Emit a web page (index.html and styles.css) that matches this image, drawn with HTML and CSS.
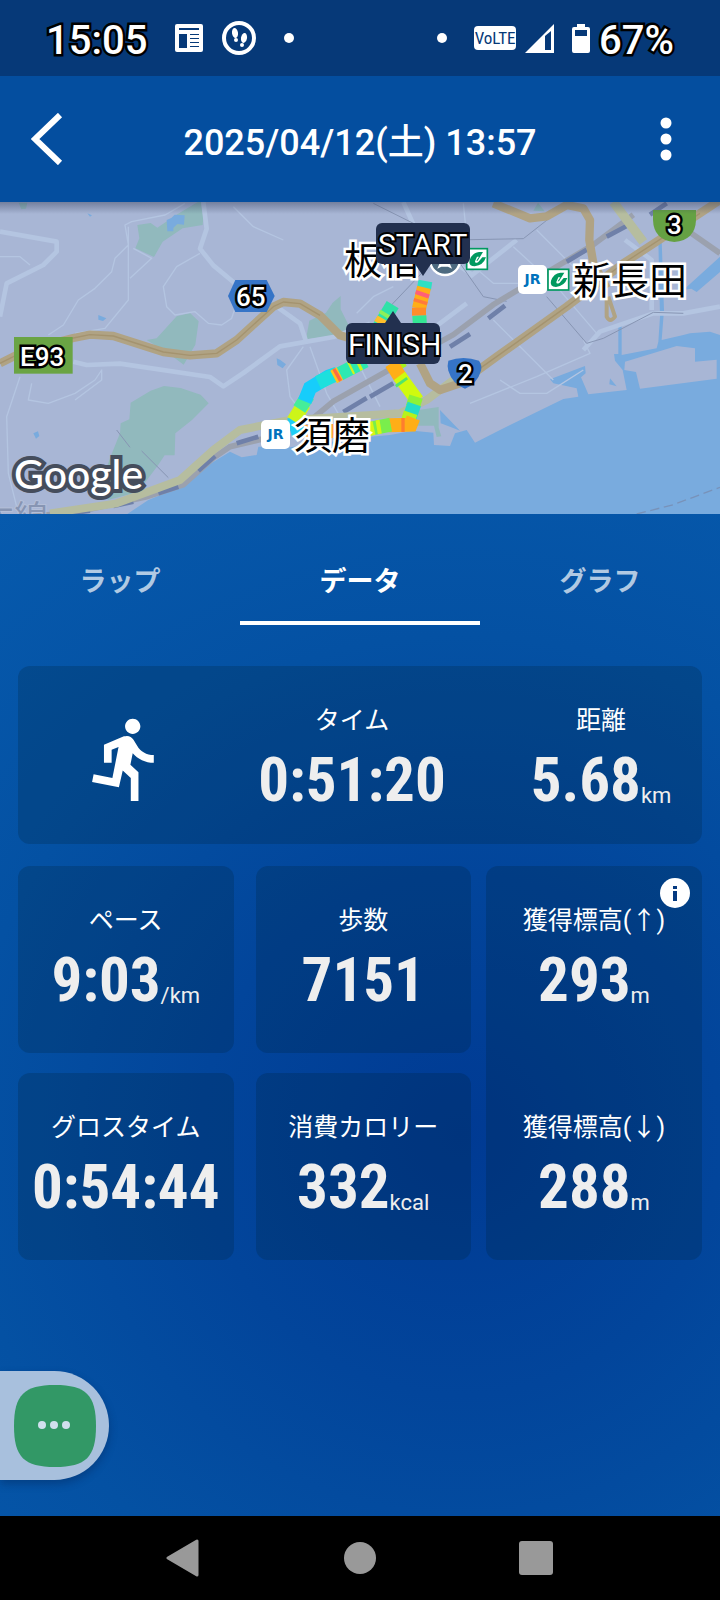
FILE: index.html
```
<!DOCTYPE html>
<html lang="ja">
<head>
    <meta charset="UTF-8">
    <meta name="viewport" content="width=device-width, initial-scale=1.0">
    <title>2025/04/12(土) 13:57</title>
    <link rel="stylesheet" href="styles.css">
</head>
<body>
    <div class="status-bar">
        <span class="clock">15:05</span>
        <svg class="icon-news" viewBox="0 0 28 28" width="28" height="28">
            <rect x="0" y="0" width="28" height="28" rx="2" fill="#fff"/>
            <path d="M4 4h20v2H4zM4 10h8v14H4zM15 10h9v1h-9zM15 14h9v1h-9zM15 18h9v1h-9zM15 22h9v1h-9z" fill="#063978"/>
        </svg>
        <svg class="icon-steps" viewBox="0 0 34 34" width="34" height="34">
            <circle cx="17" cy="17" r="15" fill="none" stroke="#fff" stroke-width="4"/>
            <g fill="#fff">
                <ellipse cx="13" cy="12" rx="3" ry="5" transform="rotate(-8 13 12)"/>
                <ellipse cx="14" cy="19" rx="2" ry="2"/>
                <ellipse cx="22" cy="17" rx="3" ry="5" transform="rotate(10 22 17)"/>
                <ellipse cx="20" cy="24" rx="2" ry="2"/>
            </g>
        </svg>
        <span class="dot dot-left"></span>
        <span class="dot dot-right"></span>
        <span class="volte">VoLTE</span>
        <svg class="icon-signal" viewBox="0 0 29 29" width="29" height="29">
            <path d="M0 29L29 0v29z" fill="#fff"/>
            <path d="M20 12l6-5v19h-6z" fill="#063978"/>
        </svg>
        <svg class="icon-battery" viewBox="0 0 18 29" width="18" height="29">
            <path d="M5 0h8v3h3a2 2 0 0 1 2 2v22a2 2 0 0 1-2 2H2a2 2 0 0 1-2-2V5a2 2 0 0 1 2-2h3z" fill="#fff"/>
            <path d="M3 6h12v6H3z" fill="#063978"/>
        </svg>
        <span class="battery-level">67%</span>
    </div>

    <header class="app-bar">
        <button class="bar-button" aria-label="戻る">
            <svg viewBox="0 0 32 52" width="32" height="52">
                <path d="M29 2L4 26l25 24" fill="none" stroke="#fff" stroke-width="6"/>
            </svg>
        </button>
        <h1>2025/04/12(土) 13:57</h1>
        <button class="bar-button" aria-label="メニュー">
            <svg viewBox="0 0 12 44" width="12" height="44" fill="#fff">
                <circle cx="6" cy="6" r="5.5"/>
                <circle cx="6" cy="22" r="5.5"/>
                <circle cx="6" cy="38" r="5.5"/>
            </svg>
        </button>
    </header>

    <div class="map">
        <svg class="map-ground" viewBox="0 6 2160 936" preserveAspectRatio="xMidYMid slice">
            <rect x="0" y="0" width="2160" height="960" fill="#a8b6d5"/>
            <!-- parks -->
            <g fill="#91b9bd">
                <path d="M412 75l40-6 20 14 60-40 50-30 20-12 8 50-2 24-60 10-60 40-26 46-56-26 12-30z"/>
                <path d="M440 420l30-5 60-66 40-10 26 25-10 70-35 60-40-30z"/>
                <path d="M392 608l60-36 40-14 50 6 60 20 24 26-50 50-50 40-2 66-30 0-20 30-60 80-90 24-20-54 30-82 26-64 2-30 26-12z"/>
                <path d="M918 418l10-56 50-24 20-30 24-20 0 40 30 60-60 20z"/>
                <path d="M56 8h26l-4 18-14 2zM1225 650l30-20 61-9v62l8 26-14 2-8-34-77 0z"/>
                <path d="M1600 32l14-24 20 26z"/>
            </g>
            <!-- sea -->
            <g fill="#79abde">
                <path d="M355 960L445 900 555 855 620 798 690 755 725 772 770 765 775 740 870 742 1110 710 1170 705 1240 692 1300 698 1302 735 1350 738 1365 700 1400 690 1425 728 1500 690 1690 597 1735 590 1730 565 1660 550 1650 538 1755 498 1757 520 1743 532 1765 583 1880 570 1868 510 1845 482 1842 462 1855 462 1855 370 1865 370 1865 465 1970 445 1975 425 1980 350 1975 120 1985 120 1992 330 1985 420 2050 405 2070 400 2130 395 2160 405 2160 960z"/>
                <path d="M2160 170v46l-70 60-16-10-24 4z"/>
                <path d="M500 60l14-6 10-10 30 2-2 28-20-2-12 12 0 10-18 0zM262 40l14 6-6 4zM295 345l24 10-10 8-14-4zM100 700l14-6 4 14-10 8zM830 475l10 4 18 14-10 12-16-10zM1320 630l60 62-30-12-28-10zM1830 535l20 24-22-6z"/>
            </g>
            <path d="M1875 485l155-47 55 7 0 40 65-6 0 57-230 30-12-50-35-6z" fill="#a8b6d5"/>
            <!-- minor roads -->
            <g fill="none" stroke="#b4c5e1" stroke-linejoin="round">
                <g stroke-width="4">
                    <path d="M145 405l45-30 45-75 50-35 50-50 10-40 40-40-10-60 20-10 100-20 60-35M385 80v220l-70 85-90 15M400 145l55 30-65 60M600 160l-70 40-40 60 10 60 25 25 60-10 40 35 40 5 30-20 20-60M0 170h60l30 25M225 600l80-60v-30l-20 30-60 40-80 30-60-10 10-50M60 530l-40 120 5 170 30 120M700 20l60 60 90 40M1070 340l50-50 60-30M910 440l-50 70 10 80 30 40M930 440l50 140 80 140M1080 500l60 120"/>
                    <path d="M1380 120l30 0M1410 190l70 60 130 0M1540 140l130 120 120 140M1610 90l120 120M1480 360l180 180M1410 610l200-80 160-70-20-40M1500 540l60 40 80 0 110-70M1390 10l10 100"/>
                </g>
                <g stroke-width="14">
                    <path d="M0 95l170 30 0 30-40 40-110 55-20 100"/>
                    <path d="M610 6l10 80-20 60 40 50 60 50 70 70M220 485l40 10 100-4 270 40 40 28 60-40 110-80 160-28 110-40"/>
                    <path d="M1210 6l40 90 110 90 60 40M1410 230l140-110M1750 450l50-55 160-55 90 0 110-20M1955 330v-150l-80-60"/>
                    <path d="M830 320l70 50 20 60M1200 460l200-150"/>
                </g>
            </g>
            <!-- railways -->
            <g fill="none">
                <path d="M1120 10l120 60 140 60M1160 330l200-210 210-4 140-110M1380 190l70 100 70 14M1640 290l120 140 50-15 150-78 90 3M350 690l40 52M425 753l80 80" stroke="#8795b3" stroke-width="3"/>
                <path d="M0 960l240-26 200-44 110-36 90-80 50-34 110-26 140-60 60-50 160-90 200-110 120-90 100-60 100-60 100-60 120-90" stroke="#9ba1ae" stroke-width="17"/>
                <path d="M210 940l60-8M340 918l60-13M475 880l60-20M595 812l50-44M710 730l65-20M1030 636l70-42M1110 590l70-40M1350 440l60-38M1465 355l50-38M1700 185l60-36M1820 110l60-32M1950 44l50-34" stroke="#6f80a9" stroke-width="14"/>
                <path d="M2060 90l100 70" stroke="#9ba1ae" stroke-width="17"/>
            </g>
            <!-- main roads -->
            <g fill="none" stroke-linejoin="round">
                <path d="M150 940l200-30 190-70 100-90 80-60 150-30 330-20 80-40 80-60" stroke="#b6bd9f" stroke-width="24"/>
                <path d="M1840 6l90 120" stroke="#b6bd9f" stroke-width="28"/>
                <g stroke="#b0a384" stroke-width="25">
                    <path d="M0 490l80-40 140-36 50-10 70 4 150 48 80 10 80-6 60-40 110-100 30-14 50 5 60 35 60 60 50 15"/>
                    <path d="M1260 490l30 60 30 20 60-20 110-80 210-150 170-130 230-150 60-40"/>
                    <path d="M1480 10l110 45 50-6 60-34 50 10 20 35-2 60 12 70 40 75"/>
                    <path d="M1820 290v60q10 20 25 0l-20-60" stroke-width="12"/>
                </g>
                <path d="M0 490l80-40 140-36 50-10 70 4 150 48 80 10 80-6 60-40 110-100 30-14 50 5 60 35M1440 505l50-35 210-150 170-130 230-150" stroke="#a4936f" stroke-width="4"/>
            </g>
            <path d="M1910 942l110-28 140-52" fill="none" stroke="#7892b9" stroke-width="4" stroke-dasharray="28 14"/>
            <!-- run track, coloured by pace -->
            <g fill="none" stroke-width="42">
                <path d="M1276 243l-4 24" stroke="#2ee0c2"/>
                <path d="M1272 262l-15 64" stroke="#ffae17"/>
                <path d="M1269 277l-4 12" stroke="#ff5f77"/>
                <path d="M1263 300l-3 10" stroke="#ff7a3c"/>
                <path d="M1257 323l0 24" stroke="#ff8c2a"/>
                <path d="M1258 347l2 34" stroke="#34e694"/>
                <path d="M1210 480l-36 20" stroke="#a5f01e"/>
                <path d="M1174 490l28 44" stroke="#ffae17"/>
                <path d="M1198 528l54 74" stroke="#d0fa0e"/>
                <path d="M1202 543l5 7" stroke="#52e66a"/>
                <path d="M1248 590l-10 32" stroke="#8df236"/>
                <path d="M1243 612l-14 40" stroke="#23dcc8"/>
                <path d="M1232 638l-8 24" stroke="#b6f21c"/>
                <path d="M1240 654l-8 20-66 2" stroke="#ffae17"/>
                <path d="M1214 675h-10" stroke="#ff7d2e"/>
                <path d="M1172 674l-80 16" stroke="#79ee4c"/>
                <path d="M1142 680l-12 2M1122 684l-14 3" stroke="#d6f614"/>
                <path d="M1092 690l-180 6" stroke="#ffa43a"/>
                <path d="M896 704l-14-54" stroke="#21cdf4"/>
                <path d="M880 662l32-50" stroke="#cdf51a"/>
                <path d="M898 627l26-40" stroke="#45ed9a"/>
                <path d="M914 604l16-40 56-34 22-8" stroke="#17cdfb"/>
                <path d="M954 548l60-28" stroke="#1de0dd"/>
                <path d="M1001 531l20-11" stroke="#ffc31c"/>
                <path d="M1007 527l9-5" stroke="#ff6c47"/>
                <path d="M1020 521l76-39" stroke="#2de9b2"/>
                <path d="M1050 505l6-3M1072 494l8-4" stroke="#d3f21e"/>
                <path d="M1132 390l46-76" stroke="#2fe2a8"/>
                <path d="M1141 374l10-17" stroke="#ffbe2a"/>
                <path d="M1154 350l6-10" stroke="#8def59"/>
            </g>
            <!-- road shields -->
            <path d="M684 288l22-48h94l24 48-24 48h-94z" fill="#3574c7"/>
            <path d="M1345 482q45-16 92 0 10 14 6 30-12 40-48 54-38-14-50-54-4-16 0-30z" fill="#3574c7"/>
            <path d="M1959 30h129v30q-2 60-65 66-62-6-64-66z" fill="#65a143"/>
            <rect x="42" y="411" width="176" height="110" fill="#6aa444"/>
            <!-- station marks -->
            <circle cx="1335" cy="180" r="45" fill="#4d6a80" stroke="#fff" stroke-width="7"/>
            <path d="M1312 206l6-14-6-10h44l-6 10 6 14-12-6h-20z" fill="#fff"/>
            <g id="subway">
                <rect x="1400" y="146" width="62" height="62" fill="#fff" stroke="#00995f" stroke-width="5"/>
                <path d="M1409 180q8-22 28-24h12l-16 26h-4l8-12h-6l-6 14q0 8 10 2l12-14h11q-8 24-34 27-20-1-15-19z" fill="#00995f"/>
            </g>
            <use href="#subway" x="244" y="62"/>
        </svg>
        <span class="place place-itayado">板宿</span>
        <span class="place place-shinnagata">新長田</span>
        <span class="place place-suma">須磨</span>
        <span class="place place-line">本線</span>
        <span class="jr jr-shinnagata">JR</span>
        <span class="jr jr-suma">JR</span>
        <span class="road road-65">65</span>
        <span class="road road-2">2</span>
        <span class="road road-3">3</span>
        <span class="road road-e93">E93</span>
        <span class="flag flag-start">START</span>
        <span class="flag flag-finish">FINISH</span>
        <span class="google">Google</span>
        <div class="map-shadow"></div>
    </div>

    <main>
        <nav class="tabs">
            <button class="tab">ラップ</button>
            <button class="tab active">データ</button>
            <button class="tab">グラフ</button>
        </nav>

        <section class="card summary">
            <svg class="runner" viewBox="0 0 24 24" width="92" height="92" fill="#fff">
                <path d="M13.49 5.48c1.1 0 2-.9 2-2s-.9-2-2-2-2 .9-2 2 .9 2 2 2zm-3.6 13.9l1-4.4 2.1 2v6h2v-7.5l-2.1-2 .6-3c1.3 1.5 3.3 2.5 5.5 2.5v-2c-1.9 0-3.5-1-4.3-2.4l-1-1.6c-.4-.6-1-1-1.7-1-.3 0-.5.1-.8.1l-5.2 2.2v4.7h2v-3.4l1.8-.7-1.6 8.1-4.9-1-.4 2 7 1.4z"/>
            </svg>
            <div class="stat">
                <span class="label">タイム</span>
                <span class="figure"><span class="value">0:51:20</span></span>
            </div>
            <div class="stat distance">
                <span class="label">距離</span>
                <span class="figure"><span class="value">5.68</span><span class="unit">km</span></span>
            </div>
        </section>

        <div class="details">
            <div class="grid">
                <section class="card stat">
                    <span class="label">ペース</span>
                    <span class="figure"><span class="value">9:03</span><span class="unit">/km</span></span>
                </section>
                <section class="card stat">
                    <span class="label">歩数</span>
                    <span class="figure"><span class="value">7151</span></span>
                </section>
                <section class="card stat">
                    <span class="label">グロスタイム</span>
                    <span class="figure"><span class="value">0:54:44</span></span>
                </section>
                <section class="card stat">
                    <span class="label">消費カロリー</span>
                    <span class="figure"><span class="value">332</span><span class="unit">kcal</span></span>
                </section>
            </div>
            <section class="card elevation">
                <button class="info" aria-label="獲得標高について">
                    <svg viewBox="0 0 30 30" width="30" height="30">
                        <circle cx="15" cy="15" r="15" fill="#fff"/>
                        <path d="M13 8h4v3h-4zM13 13h4v10h-4z" fill="#053a80"/>
                    </svg>
                </button>
                <div class="stat">
                    <span class="label">獲得標高(↑)</span>
                    <span class="figure"><span class="value">293</span><span class="unit">m</span></span>
                </div>
                <div class="stat">
                    <span class="label">獲得標高(↓)</span>
                    <span class="figure"><span class="value">288</span><span class="unit">m</span></span>
                </div>
            </section>
        </div>

        <button class="bubble" aria-label="その他">
            <svg viewBox="0 0 82 82" width="82" height="82">
                <path d="M41 0C72 0 82 10 82 41S72 82 41 82 0 72 0 41 10 0 41 0z" fill="#329866"/>
                <g fill="#d0e0ee">
                    <circle cx="28" cy="40" r="4"/>
                    <circle cx="40" cy="40" r="4"/>
                    <circle cx="52" cy="40" r="4"/>
                </g>
            </svg>
        </button>
    </main>

    <nav class="system-nav">
        <button aria-label="戻る">
            <svg viewBox="0 0 36 38" width="36" height="38">
                <path d="M2 19L31 2v34z" fill="#999" stroke="#999" stroke-width="3" stroke-linejoin="round"/>
            </svg>
        </button>
        <button aria-label="ホーム">
            <svg viewBox="0 0 36 38" width="36" height="38">
                <circle cx="18" cy="19" r="16" fill="#999"/>
            </svg>
        </button>
        <button aria-label="アプリ履歴">
            <svg viewBox="0 0 36 38" width="36" height="38">
                <rect x="1" y="2" width="34" height="34" rx="3" fill="#999"/>
            </svg>
        </button>
    </nav>
</body>
</html>
```
FILE: styles.css
```
* {
    box-sizing: border-box;
}
body {
    margin: 0;
    min-height: 100vh;
    display: flex;
    flex-direction: column;
    font-family: Roboto, "Noto Sans CJK JP", sans-serif;
    color: #fff;
    background: #000;
}
button {
    border: none;
    padding: 0;
    background: none;
    color: inherit;
    font-family: inherit;
    cursor: pointer;
}
svg {
    display: block;
}

/* status bar */
.status-bar {
    display: flex;
    align-items: center;
    height: 76px;
    padding: 0 46px 0 46px;
    background: #063978;
}
.clock,
.battery-level {
    font-size: 40px;
    font-weight: 500;
    line-height: 48px;
    padding-top: 5px;
    -webkit-text-stroke: 5px #000;
    paint-order: stroke fill;
}
.icon-news {
    margin-left: 28px;
}
.icon-steps {
    margin-left: 19px;
}
.dot {
    width: 10px;
    height: 10px;
    border-radius: 50%;
    background: #fff;
}
.dot-left {
    margin-left: 28px;
}
.dot-right {
    margin-left: auto;
}
.volte {
    width: 42px;
    height: 24px;
    margin-left: 27px;
    margin-right: 9px;
    border-radius: 4px;
    background: #fff;
    color: #063978;
    font-family: "Roboto Condensed", "Liberation Sans Narrow", "Open Sans", sans-serif;
    font-size: 17px;
    line-height: 24px;
    text-align: center;
}
.icon-battery {
    margin-left: 18px;
    margin-right: 9px;
}

/* app bar */
.app-bar {
    display: flex;
    align-items: center;
    justify-content: space-between;
    height: 126px;
    padding: 0 27px 0 20px;
    background: #044e9f;
}
.app-bar h1 {
    margin: 0;
    padding: 8px 0 0 7px;
    font-size: 36px;
    font-weight: 500;
    line-height: 44px;
}
.bar-button {
    display: flex;
    justify-content: center;
    width: 54px;
}

/* map */
.map {
    position: relative;
    height: 312px;
    overflow: hidden;
}
.map-ground {
    width: 100%;
    height: 100%;
}
.map-shadow {
    position: absolute;
    top: 0;
    left: 0;
    right: 0;
    height: 12px;
    background: linear-gradient(rgba(50, 60, 90, 0.45), rgba(50, 60, 90, 0));
}
.place,
.road,
.jr,
.flag,
.google {
    position: absolute;
    white-space: nowrap;
    paint-order: stroke fill;
}
.place {
    color: #000;
    font-size: 38px;
    line-height: 44px;
    -webkit-text-stroke: 5px #fff;
}
.place-itayado {
    left: 344px;
    top: 37px;
}
.place-shinnagata {
    left: 573px;
    top: 57px;
}
.place-suma {
    left: 294px;
    top: 212px;
}
.place-line {
    left: -20px;
    top: 294px;
    font-size: 34px;
    color: #8795b3;
    -webkit-text-stroke: 2px #b4bfd8;
}
.jr {
    width: 29px;
    height: 29px;
    border-radius: 5px;
    background: #fff;
    color: #0072bc;
    font-family: "DejaVu Sans", sans-serif;
    font-size: 14px;
    font-weight: bold;
    line-height: 29px;
    text-align: center;
}
.jr-shinnagata {
    left: 518px;
    top: 63px;
}
.jr-suma {
    left: 261px;
    top: 218px;
}
.road {
    font-size: 26px;
    font-weight: 500;
    line-height: 32px;
    -webkit-text-stroke: 5px #000;
}
.road-65 {
    left: 236px;
    top: 79px;
}
.road-2 {
    left: 458px;
    top: 156px;
}
.road-3 {
    left: 667px;
    top: 7px;
}
.road-e93 {
    left: 20px;
    top: 139px;
}
.flag {
    font-size: 30px;
    line-height: 44px;
    width: 94px;
    height: 41px;
    padding-left: 2px;
    border-radius: 6px;
    background: #22304f;
    -webkit-text-stroke: 4px #000;
}
.flag::after {
    content: "";
    position: absolute;
    border: 8px solid transparent;
}
.flag-start {
    left: 376px;
    top: 21px;
}
.flag-start::after {
    left: 39px;
    top: 41px;
    border-top: 12px solid #22304f;
    border-bottom: none;
}
.flag-finish {
    left: 346px;
    top: 121px;
}
.flag-finish::after {
    left: 39px;
    bottom: 41px;
    border-bottom: 12px solid #22304f;
    border-top: none;
}
.google {
    left: 14px;
    top: 248px;
    font-family: Lato, sans-serif;
    font-size: 41px;
    font-weight: 500;
    line-height: 48px;
    -webkit-text-stroke: 8px #454d5c;
}

/* content */
main {
    position: relative;
    flex: 1;
    padding: 0 18px 120px;
    background: radial-gradient(circle at 64% 62%, #003a93 0, #02459b 260px, #0451a3 500px, #075bae 800px);
}
.tabs {
    display: flex;
    margin: 0 -18px;
}
.tab {
    flex: 1;
    height: 111px;
    padding-top: 28px;
    border-bottom: 4px solid transparent;
    font-size: 27px;
    font-weight: bold;
    line-height: 36px;
    color: rgba(255, 255, 255, 0.7);
}
.tab.active {
    color: #fff;
    border-bottom-color: #fff;
}
.card {
    border-radius: 12px;
    background: rgba(0, 30, 50, 0.22);
}
.stat {
    display: flex;
    flex-direction: column;
    align-items: center;
    height: 187px;
    padding-top: 37px;
}
.label {
    font-size: 25px;
    line-height: 36px;
    white-space: nowrap;
}
.figure {
    display: flex;
    align-items: flex-end;
    color: #eee;
}
.value {
    font-family: "Roboto Condensed", "Liberation Sans Narrow", Roboto, sans-serif;
    font-size: 61px;
    font-weight: bold;
    line-height: 82px;
}
.unit {
    font-size: 22px;
    line-height: 26px;
    padding-bottom: 12px;
}
.summary {
    display: grid;
    grid-template-columns: 218fr 232fr 234fr;
    align-items: center;
    margin-top: 41px;
}
.summary .stat {
    height: 178px;
}
.summary .distance {
    padding-left: 32px;
}
.runner {
    justify-self: center;
    margin-top: 8px;
}
.details {
    display: grid;
    grid-template-columns: 453fr 216fr;
    gap: 15px;
    margin-top: 22px;
}
.grid {
    display: grid;
    grid-template-columns: 1fr 1fr;
    gap: 20px 22px;
}
.elevation {
    position: relative;
    display: grid;
    gap: 20px;
}
.info {
    position: absolute;
    top: 12px;
    right: 12px;
}
.bubble {
    position: absolute;
    left: 0;
    bottom: 36px;
    width: 109px;
    height: 109px;
    padding-left: 14px;
    border-radius: 0 55px 55px 0;
    background: #a8c0dd;
    box-shadow: 0 4px 8px rgba(0, 20, 60, 0.3);
}

/* system navigation */
.system-nav {
    display: flex;
    align-items: center;
    justify-content: center;
    gap: 140px;
    height: 84px;
}
```
